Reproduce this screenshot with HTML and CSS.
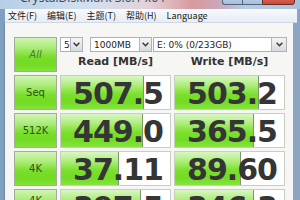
FILE: index.html
```html
<!DOCTYPE html>
<html>
<head>
<meta charset="utf-8">
<link rel="stylesheet" href="styles.css">
</head>
<body>
<div class="window">
  <div class="titlebar">
    <div class="title">CrystalDiskMark 3.0.1 x64</div>
    <div class="caption-btns">
      <span class="cb min"></span><span class="cb max"></span><span class="cb close"></span>
    </div>
  </div>
  <div class="frame">
    <div class="menubar">
      <span class="mi">文件(F)</span>
      <span class="mi">编辑(E)</span>
      <span class="mi">主题(T)</span>
      <span class="mi">帮助(H)</span>
      <span class="mi">Language</span>
    </div>
    <div class="client">
      <div class="grid">
        <div class="label all">All</div>
        <div class="controls">
          <div class="selects">
            <div class="select s-count"><span class="sv">5</span><span class="arrow"><svg width="7" height="5" viewBox="0 0 7 5"><polyline points="0.6,0.8 3.5,3.8 6.4,0.8" fill="none" stroke="#333" stroke-width="1.3"/></svg></span></div>
            <div class="select s-size"><span class="sv">1000MB</span><span class="arrow"><svg width="7" height="5" viewBox="0 0 7 5"><polyline points="0.6,0.8 3.5,3.8 6.4,0.8" fill="none" stroke="#333" stroke-width="1.3"/></svg></span></div>
            <div class="select s-drive"><span class="sv">E: 0% (0/233GB)</span><span class="arrow"><svg width="7" height="5" viewBox="0 0 7 5"><polyline points="0.6,0.8 3.5,3.8 6.4,0.8" fill="none" stroke="#333" stroke-width="1.3"/></svg></span></div>
          </div>
          <div class="hdr">Read [MB/s]</div>
          <div class="hdr">Write [MB/s]</div>
        </div>

        <div class="label">Seq</div>
        <div class="val" style="--w:82px"><span class="num">507.5</span></div>
        <div class="val" style="--w:83px"><span class="num">503.2</span></div>

        <div class="label">512K</div>
        <div class="val" style="--w:81px"><span class="num">449.0</span></div>
        <div class="val" style="--w:78px"><span class="num">365.5</span></div>

        <div class="label">4K</div>
        <div class="val" style="--w:57px"><span class="num">37.11</span></div>
        <div class="val" style="--w:65px"><span class="num">89.60</span></div>

        <div class="label two">4K<br>QD32</div>
        <div class="val" style="--w:79px"><span class="num">397.5</span></div>
        <div class="val" style="--w:78px"><span class="num">346.3</span></div>
      </div>
    </div>
  </div>
</div>
</body>
</html>
```
FILE: styles.css
```css
html, body {
  margin: 0;
  padding: 0;
}
body {
  width: 300px;
  height: 200px;
  overflow: hidden;
  font-family: "DejaVu Sans", sans-serif;
}
.window {
  width: 300px;
  height: 200px;
  display: flex;
  flex-direction: column;
  overflow: hidden;
  background: linear-gradient(90deg, #7f9fc0 0%, #9ab6d2 50%, #8aa6c4 100%);
}
.titlebar {
  height: 9px;
  flex: 0 0 9px;
  display: flex;
  justify-content: space-between;
  align-items: flex-start;
  background: linear-gradient(90deg, #b7cee6 0%, #d2e0ee 28%, #e2d2da 50%, #d89a9c 64%, #c9a6b4 72%, #b9cbe2 82%, #a9c0dc 100%);
}
.title {
  margin-top: -9px;
  padding-left: 20px;
  font-family: "Noto Sans", sans-serif;
  font-size: 12px;
  line-height: 14px;
  color: #3a4c66;
  white-space: nowrap;
}
.caption-btns {
  display: flex;
  margin-top: -14px;
  margin-right: 5px;
}
.cb {
  display: block;
  height: 19px;
  border: 1px solid #4e6682;
  box-sizing: border-box;
}
.cb.min, .cb.max {
  width: 20px;
  background: linear-gradient(#dbe6f2, #a9bfd8);
  border-right: none;
}
.cb.min { border-radius: 0 0 0 3px; }
.cb.close {
  width: 33px;
  background: linear-gradient(#e9a596, #c8493a);
  border-color: #6b2a22;
  border-radius: 0 0 3px 0;
}
.frame {
  flex: 1;
  display: flex;
  flex-direction: column;
  padding: 0 7px 0 5px;
  min-height: 0;
}
.menubar {
  height: 13px;
  flex: 0 0 13px;
  display: flex;
  align-items: center;
  gap: 10px;
  padding-left: 3px;
  margin-right: -4px;
  background: linear-gradient(#f7f9fc, #e7edf4);
  border-bottom: 1px solid #cfd8e3;
  font-family: "Noto Sans CJK SC", sans-serif;
  font-size: 9px;
  color: #1a1a1a;
  white-space: nowrap;
}
.mi {
  line-height: 13px;
}
.client {
  flex: 1;
  background: #f6f6f5;
  padding: 14px 0 0 9px;
  border-left: 1px solid #6f8aa6;
  margin-left: -1px;
}
.grid {
  display: grid;
  grid-template-columns: 43px 111px 111px;
  grid-auto-rows: 35px;
  column-gap: 3px;
  row-gap: 3px;
}
.label {
  box-sizing: border-box;
  border: 1px solid #a3ab9c;
  background: linear-gradient(#d2f5b6 0%, #a9ec76 30%, #78de2a 58%, #72db22 80%, #86e23e 100%);
  display: flex;
  align-items: center;
  justify-content: center;
  text-align: center;
  font-size: 10px;
  line-height: 12px;
  color: #2c5417;
}
.label.all {
  font-style: italic;
  color: #4b7a32;
  padding-top: 1px;
}
.controls {
  grid-column: 2 / 4;
  display: grid;
  grid-template-columns: 111px 111px;
  grid-template-rows: 15px 20px;
  column-gap: 3px;
}
.selects {
  grid-column: 1 / 3;
  display: flex;
  align-items: stretch;
}
.select {
  flex: 0 0 auto;
  box-sizing: border-box;
  height: 15px;
  border: 1px solid #adb1b5;
  background: #fff;
  display: flex;
  align-items: center;
  justify-content: space-between;
  font-size: 9px;
  color: #1c1c1c;
}
.sv {
  padding-left: 3px;
  white-space: nowrap;
}
.s-count { width: 23px; margin-right: 7px; }
.s-size { width: 62px; margin-right: 1px; }
.s-drive { width: 134px; }
.arrow {
  box-sizing: border-box;
  width: 12px;
  height: 13px;
  border-left: 1px solid #b3b6ba;
  background: linear-gradient(#f5f5f5, #d9dadc);
  display: flex;
  align-items: center;
  justify-content: center;
}
.s-drive .arrow { width: 15px; }
.hdr {
  text-align: center;
  font-weight: bold;
  font-size: 11px;
  line-height: 20px;
  color: #333;
  white-space: nowrap;
}
.val {
  box-sizing: border-box;
  border: 1px solid #c8cec4;
  background-color: #fff;
  background-image:
    linear-gradient(#7c9470, #7c9470),
    linear-gradient(#d9f6c4 0%, #aeee7c 28%, #7ce02e 55%, #72dc22 78%, #86e240 100%);
  background-size: 1px 100%, var(--w) 100%;
  background-position: var(--w) 0, 0 0;
  background-repeat: no-repeat;
  display: flex;
  justify-content: flex-end;
  align-items: flex-start;
  padding-right: 7px;
  padding-top: 3px;
}
.num {
  font-weight: bold;
  font-size: 30px;
  line-height: 30px;
  letter-spacing: -1px;
  color: #353535;
  white-space: nowrap;
}
```
